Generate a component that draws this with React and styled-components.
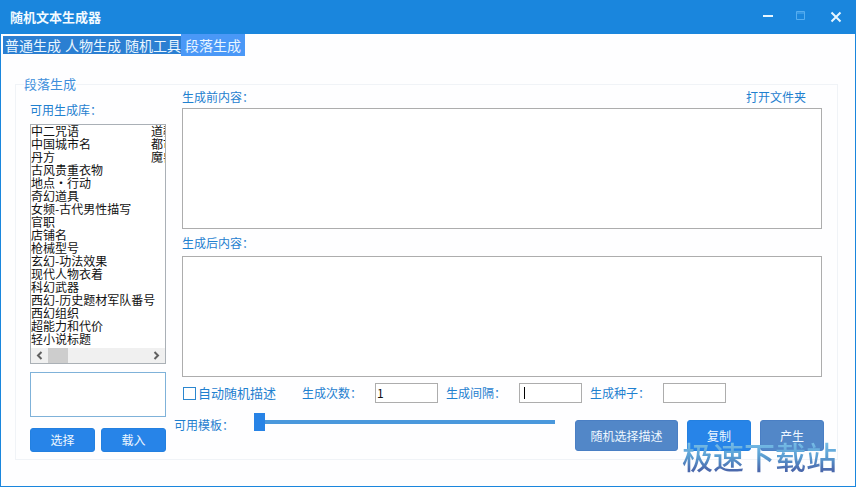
import React from "react";
import styled, { createGlobalStyle, css } from "styled-components";

const sans = '"Noto Sans CJK SC", "Noto Sans", sans-serif';

const GlobalStyle = createGlobalStyle`
  *, *::before, *::after { box-sizing: border-box; }
  body { margin: 0; background: #fff; font-family: ${sans}; font-size: 12px; color: #1f80cf; }
  button, input, textarea { font: inherit; }
  ul { list-style: none; margin: 0; padding: 0; }
`;

const Window = styled.div`
  display: flex;
  flex-direction: column;
  min-height: 100vh;
  border: 1px solid #1a86dd;
  border-top: 0;
  background: #fefeff;
`;

const TitleBar = styled.header`
  display: flex;
  align-items: center;
  justify-content: space-between;
  height: 34px;
  padding: 0 8px 0 9px;
  background: #1a86dd;
`;

const Title = styled.h1`
  margin: 0;
  font-size: 13px;
  line-height: 18px;
  font-weight: 700;
  color: #f2faff;
`;

const WindowControls = styled.div`
  display: flex;
  gap: 12px;
`;

const ControlButton = styled.button`
  display: grid;
  place-items: center;
  width: 22px;
  height: 24px;
  padding: 0;
  border: 0;
  background: none;
  color: ${(p) => (p.disabled ? "#57aef0" : "#e6f6ff")};
`;

const TabBar = styled.nav`
  display: flex;
  align-items: center;
  height: 22px;
  padding-left: 2px;
`;

const Tab = styled.button`
  height: 18px;
  padding: 0 2px;
  border: 0;
  background: #2b7fd2;
  color: #eaf6ff;
  font-size: 14px;
  line-height: 18px;
  white-space: nowrap;
  ${(p) =>
    p.$active &&
    css`
      height: 22px;
      margin-left: -2px;
      padding: 0 4px;
      line-height: 22px;
      background: #4a98f7;
    `}
`;

const Page = styled.main`
  flex: 1;
  padding: 21px 17px 26px 14px;
`;

const Group = styled.fieldset`
  min-width: 0;
  margin: 0;
  padding: 0 13px 7px 8px;
  border: 1px solid #f0f3f7;
`;

const Legend = styled.legend`
  padding: 0;
  font-size: 13px;
  line-height: 14px;
  color: #3f8fdb;
`;

const Columns = styled.div`
  display: grid;
  grid-template-columns: 136px minmax(0, 1fr);
  column-gap: 8px;
  padding-left: 6px;
`;

const Library = styled.section`
  display: flex;
  flex-direction: column;
  padding-top: 11px;
`;

const LibraryLabel = styled.span`
  margin-bottom: 6px;
  line-height: 16px;
`;

const ListFrame = styled.div`
  margin-bottom: 8px;
  border: 1px solid #aab0b6;
  background: #fff;
`;

const ListBox = styled.ul`
  display: grid;
  grid-template-rows: repeat(17, 13px);
  grid-auto-flow: column;
  grid-auto-columns: 120px;
  padding-bottom: 2px;
  overflow: hidden;
  color: #111;
`;

const ListItem = styled.li`
  line-height: 11px;
  white-space: nowrap;
`;

const ScrollBar = styled.div`
  display: flex;
  height: 15px;
  background: #f0f0f0;
`;

const ScrollArrow = styled.button`
  display: grid;
  place-items: center;
  width: 17px;
  padding: 0;
  border: 0;
  background: none;
  color: #606060;
`;

const ScrollTrack = styled.div`
  flex: 1;
`;

const ScrollThumb = styled.div`
  width: 20px;
  height: 100%;
  background: #cdcdcd;
`;

const TextBox = styled.textarea`
  display: block;
  width: 100%;
  height: ${(p) => (p.$small ? "45px" : "121px")};
  padding: 2px 4px;
  border: 1px solid ${(p) => (p.$small ? "#7fb2d9" : "#adadad")};
  border-radius: 0;
  background: #fff;
  color: #111;
  resize: none;
  outline: 0;
`;

const LibraryActions = styled.div`
  display: grid;
  grid-template-columns: 1fr 1fr;
  gap: 6px;
  margin-top: 11px;
`;

const Button = styled.button`
  height: ${(p) => (p.$large ? "31px" : "24px")};
  width: ${(p) => (p.$wide ? "103px" : p.$large ? "64px" : "100%")};
  padding: 0;
  border: 1px solid ${(p) => (p.$muted ? "#4a7fc4" : "#2380e0")};
  border-radius: 3px;
  background: ${(p) => (p.$muted ? "#5287c8" : "#2784e8")};
  color: #eef7ff;
  line-height: 20px;
  white-space: nowrap;
`;

const Editor = styled.section`
  min-width: 0;
`;

const EditorFields = styled.div`
  padding: 0 2px 0 8px;
`;

const FieldHeader = styled.div`
  display: flex;
  justify-content: space-between;
  margin-bottom: 5px;
  padding-right: 16px;
  line-height: 12px;
`;

const ResultLabel = styled.label`
  display: block;
  margin: 8px 0 7px;
  line-height: 12px;
`;

const FolderLink = styled.a`
  color: inherit;
  text-decoration: none;
`;

const Options = styled.div`
  display: flex;
  align-items: center;
  gap: 8px;
  margin-top: 6px;
`;

const CheckLabel = styled.label`
  display: flex;
  align-items: center;
  gap: 2px;
  width: 112px;
  padding-left: 1px;
  font-size: 13px;
  line-height: 20px;
  white-space: nowrap;
`;

const CheckBox = styled.input`
  appearance: none;
  flex: none;
  width: 13px;
  height: 13px;
  margin: 0;
  border: 1px solid #2b86cf;
  background: #fff;
  &:checked { background: #2b86cf; }
`;

const NumberField = styled.div`
  display: grid;
  grid-template-columns: 73px 63px;
  align-items: center;
  line-height: 20px;
`;

const NumberInput = styled.input`
  grid-area: 1 / 2;
  width: 100%;
  height: 20px;
  padding: 0 1px;
  border: 1px solid #adadad;
  border-radius: 0;
  background: #fff;
  color: #111;
  outline: 0;
`;

const Caret = styled.span`
  grid-area: 1 / 2;
  z-index: 1;
  width: 1px;
  height: 12px;
  margin-left: 5px;
  background: #000;
`;

const Footer = styled.div`
  display: flex;
  align-items: flex-start;
  padding-top: 10px;
`;

const TemplateLabel = styled.label`
  flex: none;
  width: 80px;
  padding-top: 2px;
  line-height: 20px;
`;

const Slider = styled.input`
  appearance: none;
  flex: 1;
  min-width: 0;
  height: 18px;
  margin: 0 20px 0 0;
  background: transparent;
  &::-webkit-slider-runnable-track {
    height: 4px;
    background: #4a98dc;
  }
  &::-webkit-slider-thumb {
    appearance: none;
    width: 11px;
    height: 18px;
    margin-top: -7px;
    background: #2783e6;
  }
`;

const Actions = styled.div`
  position: relative;
  display: flex;
  gap: 9px;
  padding-top: 7px;
`;

const Watermark = styled.span`
  position: absolute;
  top: 23px;
  right: -13px;
  font-size: 31px;
  font-weight: 500;
  line-height: 40px;
  white-space: nowrap;
  color: transparent;
  background: linear-gradient(#79bfe8 15%, #5a9fd3 50%, #4a68ac 85%);
  background-clip: text;
  pointer-events: none;
`;

const tabs = ["普通生成", "人物生成", "随机工具", "段落生成"];

const libraries = [
  "中二咒语", "中国城市名", "丹方", "古风贵重衣物", "地点・行动", "奇幻道具",
  "女频-古代男性描写", "官职", "店铺名", "枪械型号", "玄幻-功法效果",
  "现代人物衣着", "科幻武器", "西幻-历史题材军队番号", "西幻组织",
  "超能力和代价", "轻小说标题", "道教", "都市", "魔兽",
];

const numberFields = [
  { id: "count", label: "生成次数：", value: "1" },
  { id: "interval", label: "生成间隔：", value: "", editing: true },
  { id: "seed", label: "生成种子：", value: "" },
];

function Chevron({ right }) {
  return (
    <svg width="9" height="9" viewBox="0 0 9 9" fill="none" stroke="currentColor" strokeWidth="2">
      <path d={right ? "M2.5 1l3.5 3.5L2.5 8" : "M6.5 1L3 4.5 6.5 8"} />
    </svg>
  );
}

export default function App() {
  return (
    <>
      <GlobalStyle />
      <Window lang="zh-CN">
        <TitleBar>
          <Title>随机文本生成器</Title>
          <WindowControls>
            <ControlButton aria-label="最小化">
              <svg width="12" height="12" viewBox="0 0 12 12">
                <path d="M1 4h10v2H1z" fill="currentColor" />
              </svg>
            </ControlButton>
            <ControlButton aria-label="最大化" disabled>
              <svg width="12" height="12" viewBox="0 0 12 12" fill="none" stroke="currentColor">
                <path d="M.5 .5h8v8h-8zM0 2h9" />
              </svg>
            </ControlButton>
            <ControlButton aria-label="关闭">
              <svg width="12" height="12" viewBox="0 0 12 12" stroke="currentColor" strokeWidth="2">
                <path d="M1.5 1.5l9 9M10.5 1.5l-9 9" />
              </svg>
            </ControlButton>
          </WindowControls>
        </TitleBar>
        <TabBar>
          {tabs.map((name, i) => (
            <Tab key={name} $active={i === 3}>{name}</Tab>
          ))}
        </TabBar>
        <Page>
          <Group>
            <Legend>段落生成</Legend>
            <Columns>
              <Library>
                <LibraryLabel id="library-label">可用生成库：</LibraryLabel>
                <ListFrame>
                  <ListBox role="listbox" aria-labelledby="library-label" tabIndex={0}>
                    {libraries.map((name) => (
                      <ListItem key={name} role="option" aria-selected={false}>{name}</ListItem>
                    ))}
                  </ListBox>
                  <ScrollBar>
                    <ScrollArrow aria-label="向左滚动"><Chevron /></ScrollArrow>
                    <ScrollTrack><ScrollThumb /></ScrollTrack>
                    <ScrollArrow aria-label="向右滚动"><Chevron right /></ScrollArrow>
                  </ScrollBar>
                </ListFrame>
                <TextBox $small aria-label="已选生成库" />
                <LibraryActions>
                  <Button>选择</Button>
                  <Button>载入</Button>
                </LibraryActions>
              </Library>
              <Editor>
                <EditorFields>
                  <FieldHeader>
                    <label htmlFor="before">生成前内容：</label>
                    <FolderLink href="#folder">打开文件夹</FolderLink>
                  </FieldHeader>
                  <TextBox id="before" />
                  <ResultLabel htmlFor="after">生成后内容：</ResultLabel>
                  <TextBox id="after" />
                  <Options>
                    <CheckLabel>
                      <CheckBox type="checkbox" />
                      自动随机描述
                    </CheckLabel>
                    {numberFields.map((f) => (
                      <NumberField key={f.id}>
                        <label htmlFor={f.id}>{f.label}</label>
                        <NumberInput id={f.id} type="text" defaultValue={f.value} />
                        {f.editing && <Caret />}
                      </NumberField>
                    ))}
                  </Options>
                </EditorFields>
                <Footer>
                  <TemplateLabel htmlFor="template">可用模板：</TemplateLabel>
                  <Slider id="template" type="range" min="0" max="100" defaultValue="0" />
                  <Actions>
                    <Button $large $wide $muted>随机选择描述</Button>
                    <Button $large>复制</Button>
                    <Button $large $muted>产生</Button>
                    <Watermark>极速下载站</Watermark>
                  </Actions>
                </Footer>
              </Editor>
            </Columns>
          </Group>
        </Page>
      </Window>
    </>
  );
}
